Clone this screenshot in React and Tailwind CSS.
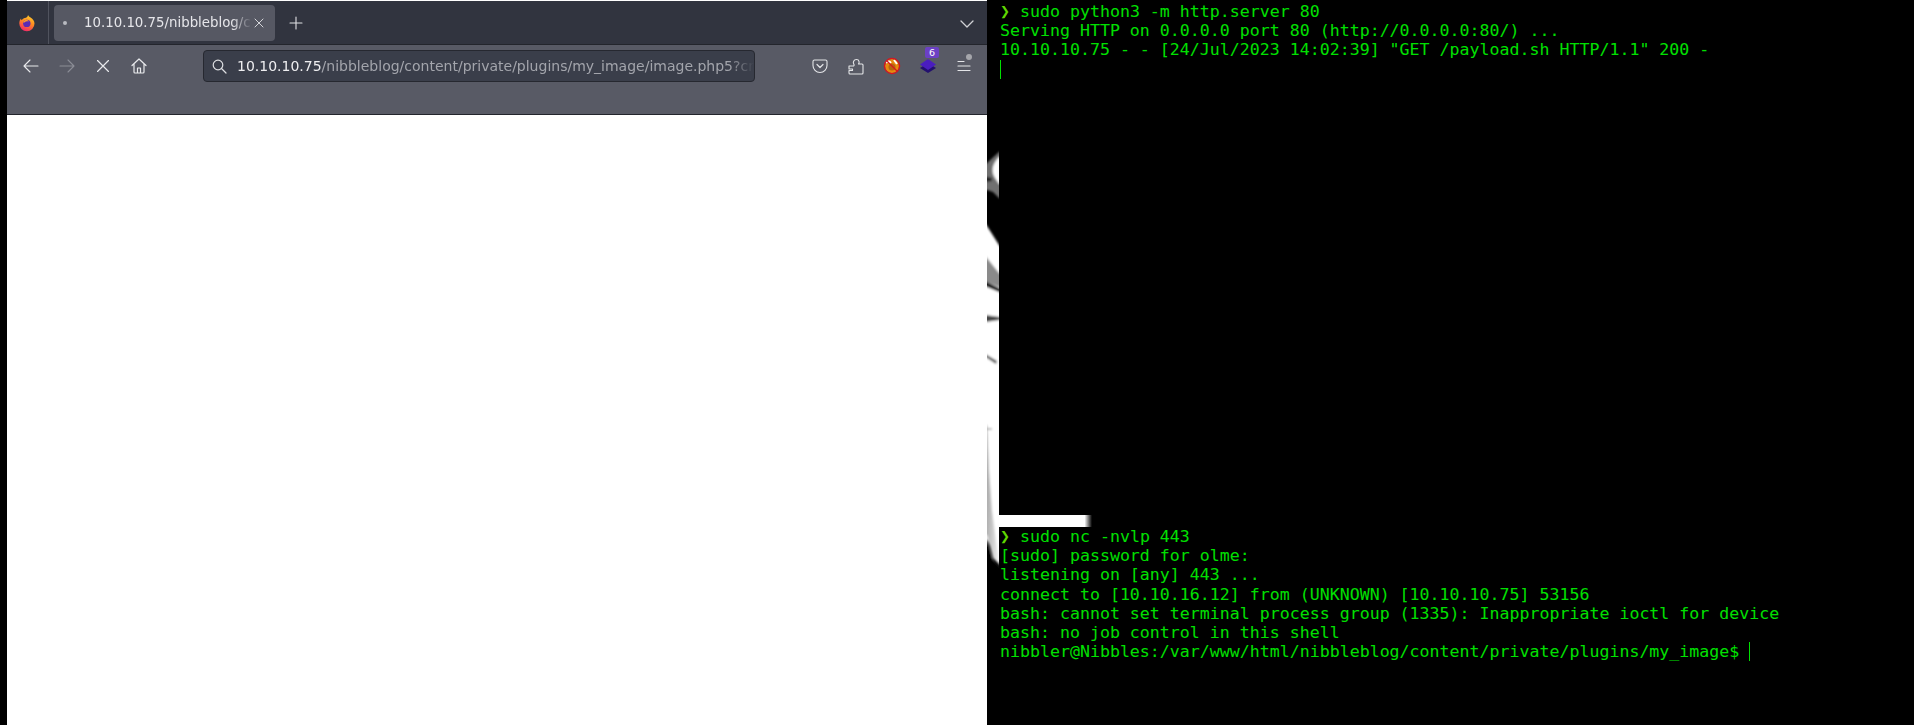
import React from "react";

const TERM_TOP = [
  { p: true, t: "sudo python3 -m http.server 80" },
  { t: "Serving HTTP on 0.0.0.0 port 80 (http://0.0.0.0:80/) ..." },
  { t: '10.10.10.75 - - [24/Jul/2023 14:02:39] "GET /payload.sh HTTP/1.1" 200 -' },
];
const TERM_BOTTOM = [
  { p: true, t: "sudo nc -nvlp 443" },
  { t: "[sudo] password for olme:" },
  { t: "listening on [any] 443 ..." },
  { t: "connect to [10.10.16.12] from (UNKNOWN) [10.10.10.75] 53156" },
  { t: "bash: cannot set terminal process group (1335): Inappropriate ioctl for device" },
  { t: "bash: no job control in this shell" },
];

function Line({ p, t, children }) {
  return (
    <div className="h-[19.2px] leading-[19.2px] whitespace-pre flex items-center">
      {p && <span className="w-[20px] text-[#5fd700]">❯</span>}
      <span>{t}</span>
      {children}
    </div>
  );
}

const Cursor = ({ className = "" }) => <span className={`inline-block w-px h-[19px] bg-[#00e000] ${className}`} />;

function Firefox() {
  return (
    <svg width="18" height="18" viewBox="0 0 18 18" className="-ml-[2px]">
      <defs>
        <linearGradient id="ff" x1="0.7" y1="0" x2="0.3" y2="1">
          <stop offset="0" stopColor="#ffd02e" />
          <stop offset="0.45" stopColor="#ff8a1f" />
          <stop offset="1" stopColor="#f0256d" />
        </linearGradient>
      </defs>
      <path d="M10 1c.6 1.3 1.4 1.6 2.6 2.5C15 5 16.5 7 16.5 9.6a7.6 7.6 0 0 1-15.2 0C1.3 7.4 2 5.6 3 4.6c0 .8.3 1.3.8 1.6C4.5 4.8 6.2 3.9 8 3.8 9 3.3 9.8 2.3 10 1z" fill="url(#ff)" />
      <circle cx="8.8" cy="9.4" r="3.7" fill="#5b2bb5" />
      <path d="M5 8c1-1.7 2.6-2.3 4-2 .8.2 1.6.8 2 1.5-1.5-.5-3.2-.4-4 .5-.7.7-1.4.7-2 0z" fill="#ff9a2a" />
    </svg>
  );
}

const stroke = { fill: "none", stroke: "currentColor", strokeWidth: 1.3, strokeLinecap: "round", strokeLinejoin: "round" };

function Wallpaper() {
  return (
    <svg width="12" height="725" viewBox="0 0 12 725" className="block shrink-0">
      <defs>
        <filter id="soft" x="-40" y="0" width="92" height="725" filterUnits="userSpaceOnUse"><feGaussianBlur stdDeviation="0.8" /></filter>
        <linearGradient id="lg" x1="0" y1="0" x2="1" y2="0.2">
          <stop offset="0" stopColor="#8d8d8d" />
          <stop offset="0.5" stopColor="#b8b8b8" />
          <stop offset="1" stopColor="#ffffff" />
        </linearGradient>
      </defs>
      <rect width="12" height="725" fill="#000" />
      <g filter="url(#soft)">
        <path d="M-8 168L0 163L12 152L18 150V200L12 198L6 192L0 190H-8Z" fill="#6f6f6f" />
        <path d="M18 157H12C6 163 4 170 7 176C9 180 11 182 12 184H18Z" fill="#fff" />
        <path d="M-8 175L5 178V181L-8 183Z" fill="#222" />
        <path d="M-8 214L0 226L12 245L18 252V570L12 562L0 540H-8Z" fill="#fff" />
        <path d="M-8 250L0 258L12 273L18 278V288L12 287L0 282H-8Z" fill="#8a8a8a" />
        <path d="M-8 279L0 282L12 288L18 290V294L12 292L0 287L-8 285Z" fill="#111" />
        <path d="M-8 314L12 317H18V320H12L-8 323Z" fill="#444" />
        <path d="M-8 351L0 355L10 361L9 364L0 358L-8 354Z" fill="#555" />
        <path d="M-8 428H5V430H-8Z" fill="#bbb" />
        <path d="M-8 425H0L2 470L5 510L12 562L18 570L6 558L0 535H-8Z" fill="url(#lg)" />
        <path d="M-8 536H-2L7 565L18 575V730H-8Z" fill="#000" />
      </g>
    </svg>
  );
}

export default function App() {
  return (
    <div className="w-[1914px] h-[725px] bg-black flex overflow-hidden">
      <div className="w-[7px] shrink-0 bg-black" />

      {/* Browser */}
      <div className="w-[980px] shrink-0 flex flex-col bg-white pt-px [font-family:'DejaVu_Sans',sans-serif]">
        <div className="h-[43px] bg-[#31343f] flex items-center relative shrink-0">
          <div className="w-[42px] h-full flex items-center justify-center border-r border-[#50535e] mr-[5px]">
            <Firefox />
          </div>
          <div className="w-[221px] h-[36px] mt-[1px] rounded-[4px] bg-[#565863] flex items-center text-[#e6e6ea] text-[13.33px] relative">
            <span className="w-[4px] h-[4px] rounded-full bg-[#b8bac0] ml-[9px] mr-[17px]" />
            <span className="w-[168px] overflow-hidden whitespace-nowrap [mask-image:linear-gradient(to_right,#000_88%,transparent)]">10.10.10.75/nibbleblog/c</span>
            <svg width="12" height="12" viewBox="0 0 12 12" className="ml-[1px] text-[#d4d5d9]"><path d="M2 2L10 10M10 2L2 10" {...stroke} strokeWidth="1" /></svg>
          </div>
          <svg width="14" height="14" viewBox="0 0 14 14" className="ml-[14px] text-[#e0e1e4]"><path d="M7 1V13M1 7H13" {...stroke} strokeWidth="1.1" /></svg>
          <svg width="14" height="8" viewBox="0 0 14 8" className="absolute left-[953px] top-[19px] text-[#d0d1d5]"><path d="M1 1L7 7L13 1" {...stroke} /></svg>
        </div>
        <div className="h-[71px] bg-[#585a65] border-t border-t-[#23252c] border-b border-b-[#23252c] shrink-0 relative">
          <div className="h-[36px] flex items-center mt-[3px]">
            <div className="flex items-center pl-[16px] w-[196px] text-[#e8e9ec]">
              <svg width="16" height="14" viewBox="0 0 16 14" className="mr-[20px]"><path d="M15 7H1M7 1L1 7L7 13" {...stroke} strokeWidth="1.1" /></svg>
              <svg width="16" height="14" viewBox="0 0 16 14" className="mr-[22px] text-[#8b8d96]"><path d="M1 7H15M9 1L15 7L9 13" {...stroke} strokeWidth="1.1" /></svg>
              <svg width="12" height="12" viewBox="0 0 12 12" className="mr-[22px]"><path d="M0.5 0.5L11.5 11.5M11.5 0.5L0.5 11.5" {...stroke} strokeWidth="1.2" /></svg>
              <svg width="16" height="16" viewBox="0 0 16 16"><path d="M1 7.5L8 1L15 7.5M3 6V14C3 14.6 3.4 15 4 15H12C12.6 15 13 14.6 13 14V6M6.5 15V10H9.5V15" {...stroke} strokeWidth="1.2" /></svg>
            </div>
            <div className="w-[552px] h-[32px] rounded-[4px] bg-[#3a3e4a] border border-[#262830] flex items-center text-[14px]">
              <svg width="15" height="15" viewBox="0 0 15 15" className="ml-[8px] mr-[10px] text-[#dedfe2] shrink-0"><circle cx="6" cy="6" r="4.8" {...stroke} strokeWidth="1.2" /><path d="M9.5 9.5L14 14" {...stroke} strokeWidth="1.2" /></svg>
              <span className="flex-1 overflow-hidden whitespace-nowrap text-[#a3a5ac] [mask-image:linear-gradient(to_right,#000_95%,transparent_100%)]">
                <span className="text-[#eeeef0]">10.10.10.75</span>/nibbleblog/content/private/plugins/my_image/image.php5?cr
              </span>
            </div>
            <div className="flex items-center ml-[57px] text-[#e4e5e8]">
              <svg width="16" height="16" viewBox="0 0 16 16" className="mr-[20px]"><path d="M2.5 2H13.5C14.3 2 15 2.6 15 3.5V7.5C15 11.3 12 14.5 8 14.5S1 11.3 1 7.5V3.5C1 2.6 1.7 2 2.5 2Z" {...stroke} strokeWidth="1.1" /><path d="M5 6.5L8 9.5L11 6.5" {...stroke} strokeWidth="1.2" /></svg>
              <svg width="16" height="17" viewBox="0 0 16 17" className="mr-[19px]"><path d="M1 8H5C6 8 6.5 7 5.8 6.2C4.8 4.8 5.5 1.5 8.5 1.5S11.5 5 10.5 6H14C14.6 6 15 6.4 15 7V15C15 15.6 14.6 16 14 16H2C1.4 16 1 15.6 1 15V12.5H4.5V11H1Z" {...stroke} strokeWidth="1.1" /></svg>
              <svg width="18" height="18" viewBox="0 0 18 18" className="mr-[18px]">
                <circle cx="9" cy="9" r="7" fill="#e8890f" />
                <path d="M3 6C5 3 7 5 8 6M11 3L14 7" stroke="#fff" strokeWidth="2" fill="none" />
                <circle cx="9" cy="10" r="3.5" fill="#b56510" />
                <circle cx="9" cy="9" r="7.6" fill="none" stroke="#d8151f" strokeWidth="1.3" />
                <path d="M3.5 3.5L14.5 14.5" stroke="#d8151f" strokeWidth="1.3" />
              </svg>
              <div className="relative w-[18px] h-[18px] mr-[20px]">
                <svg width="18" height="18" viewBox="0 0 18 18" className="absolute left-0 top-0">
                  <path d="M9 6L17 11L9 16L1 11Z" fill="#23106f" />
                  <path d="M9 2L17 7.5L9 13L1 7.5Z" fill="#4a1dbf" />
                </svg>
                <span className="absolute left-[6px] top-[-10px] w-[14px] h-[11px] rounded-[2px] bg-[#6b40c4] text-[9.5px] leading-[11px] text-white text-center">6</span>
              </div>
              <div className="relative w-[14px] h-[12px]">
                <svg width="14" height="12" viewBox="0 0 14 12" className="absolute left-0 top-0"><path d="M1 1.5H7M1 6H13M1 10.5H13" {...stroke} strokeWidth="1.2" /></svg>
                <span className="absolute left-[9px] top-[-6px] w-[6px] h-[6px] rounded-full bg-[#a5a6ab]" />
              </div>
            </div>
          </div>
        </div>
        <div className="flex-1 bg-white" />
      </div>

      <Wallpaper />

      {/* Terminals */}
      <div className="flex-1 flex flex-col text-[#00e000] text-[16.6px] [font-family:'DejaVu_Sans_Mono',monospace]">
        <div className="h-[515px] bg-black pl-px pt-[2px]">
          {TERM_TOP.map((l, i) => <Line key={i} {...l} />)}
          <Cursor className="block" />
        </div>
        <div className="h-[12px] w-[93px] bg-[linear-gradient(to_right,#fff_0,#fff_92%,#000_100%)]" />
        <div className="flex-1 bg-black pl-px">
          {TERM_BOTTOM.map((l, i) => <Line key={i} {...l} />)}
          <Line t="nibbler@Nibbles:/var/www/html/nibbleblog/content/private/plugins/my_image$">
            <Cursor className="ml-[10px]" />
          </Line>
        </div>
      </div>
    </div>
  );
}
